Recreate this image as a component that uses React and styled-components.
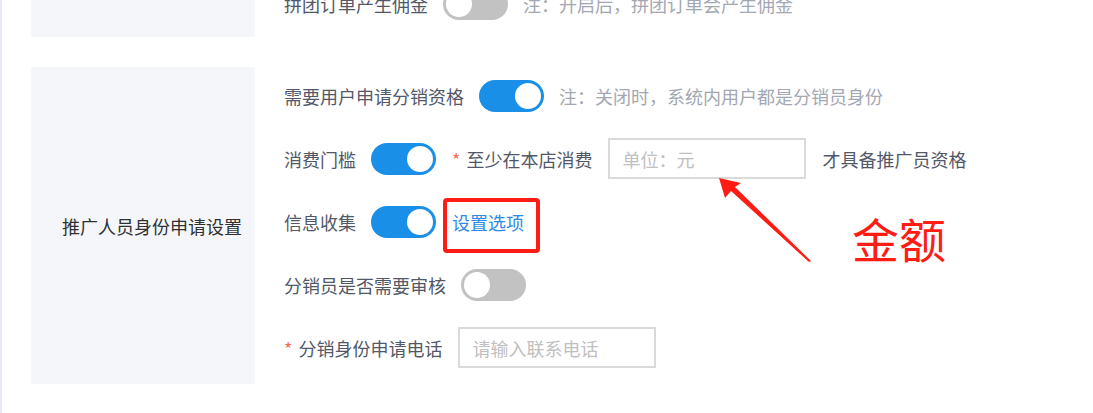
import React from 'react';
import styled, { createGlobalStyle } from 'styled-components';

const GlobalStyle = createGlobalStyle`
  html, body {
    margin: 0;
    padding: 0;
    background: #ffffff;
    overflow: hidden;
  }
  body {
    font-family: "Noto Sans CJK SC", "Noto Sans", sans-serif;
  }
`

const Page = styled.div `
  position: relative;
  width: 1093px;
  height: 413px;
  box-sizing: border-box;
  border-left: 2px solid #e6e8f5;
  padding-left: 29px;
  overflow: hidden;
`

const Sections = styled.div `
  display: flex;
  flex-direction: column;
  gap: 30px;
  margin-top: -25px;
`

const Section = styled.div `
  display: flex;
  width: 1000px;
`

const LabelCell = styled.div `
  width: 224px;
  flex: none;
  background: #f5f6fa;
  display: flex;
  align-items: center;
  box-sizing: border-box;
  padding-left: 31px;
  font-size: 18px;
  color: #303133;
`

const Content = styled.div `
  display: flex;
  flex-direction: column;
  gap: 22px;
  padding: ${props => props.$tight ? '8px 0 13px 29px' : '8px 0 16px 29px'};
`

const Row = styled.div `
  display: flex;
  align-items: center;
  height: 41px;
  font-size: 18px;
  color: #525868;
  white-space: nowrap;
`

const Text = styled.span `
  line-height: 1;
  margin-left: ${props => props.$gap || 0}px;
`

const Note = styled.span `
  margin-left: 15px;
  color: #a3a7b3;
  line-height: 1;
`

const Star = styled.span `
  color: #f56c5c;
  margin-left: ${props => props.$gap || 0}px;
  margin-right: 6px;
  font-size: 18px;
  line-height: 1;
`

const Track = styled.span `
  position: relative;
  display: inline-block;
  flex: none;
  width: 65px;
  height: 32px;
  border-radius: 16px;
  margin-left: 15px;
  background: ${props => props.$on ? '#1a8fe8' : '#c2c2c2'};
`

const Knob = styled.span `
  position: absolute;
  top: 3px;
  left: ${props => props.$on ? '36px' : '3px'};
  width: 26px;
  height: 26px;
  border-radius: 50%;
  background: #ffffff;
`

const Input = styled.input `
  box-sizing: border-box;
  width: 198px;
  height: 41px;
  margin-left: ${props => props.$gap || 16}px;
  border: 2px solid #dadada;
  padding: 0 12px;
  font-family: inherit;
  font-size: 18px;
  color: #525868;
  outline: none;
  &::placeholder {
    color: #c0c0c0;
  }
`

const LinkWrap = styled.span `
  position: relative;
  margin-left: 16px;
  line-height: 1;
`

const Link = styled.a `
  color: #2d8ae6;
  text-decoration: none;
  font-size: 18px;
`

const RedBox = styled.span `
  position: absolute;
  top: -15px;
  bottom: -22px;
  left: -9px;
  right: -16px;
  border: 4px solid #ff1c14;
  border-radius: 4px;
`

const Amount = styled.div `
  position: absolute;
  left: 850px;
  top: 210px;
  font-size: 47px;
  line-height: 1.2;
  color: #ff1c14;
`

const ArrowSvg = styled.svg `
  position: absolute;
  left: 0;
  top: 0;
  pointer-events: none;
`

function Switch({ on }) {
  return (
    <Track $on={on}>
      <Knob $on={on} />
    </Track>
  )
}

export default function App() {
  return (
    <Page>
      <GlobalStyle />
      <Sections>
        <Section>
          <LabelCell />
          <Content $tight>
            <Row>
              <Text>拼团订单产生佣金</Text>
              <Switch on={false} />
              <Note>注：开启后，拼团订单会产生佣金</Note>
            </Row>
          </Content>
        </Section>

        <Section>
          <LabelCell>推广人员身份申请设置</LabelCell>
          <Content>
            <Row>
              <Text>需要用户申请分销资格</Text>
              <Switch on />
              <Note>注：关闭时，系统内用户都是分销员身份</Note>
            </Row>
            <Row>
              <Text>消费门槛</Text>
              <Switch on />
              <Star $gap={16}>*</Star>
              <Text>至少在本店消费</Text>
              <Input placeholder='单位：元' />
              <Text $gap={16}>才具备推广员资格</Text>
            </Row>
            <Row>
              <Text>信息收集</Text>
              <Switch on />
              <LinkWrap>
                <Link href='#'>设置选项</Link>
                <RedBox />
              </LinkWrap>
            </Row>
            <Row>
              <Text>分销员是否需要审核</Text>
              <Switch on={false} />
            </Row>
            <Row>
              <Star>*</Star>
              <Text>分销身份申请电话</Text>
              <Input placeholder='请输入联系电话' $gap={16} />
            </Row>
          </Content>
        </Section>
      </Sections>

      <ArrowSvg width='1093' height='413' viewBox='0 0 1093 413'>
        <polygon
          fill='#ff1c14'
          points='717,178 739,183 733,187 809,261 807,262 729,191 723,198'
        />
      </ArrowSvg>
      <Amount>金额</Amount>
    </Page>
  )
}
